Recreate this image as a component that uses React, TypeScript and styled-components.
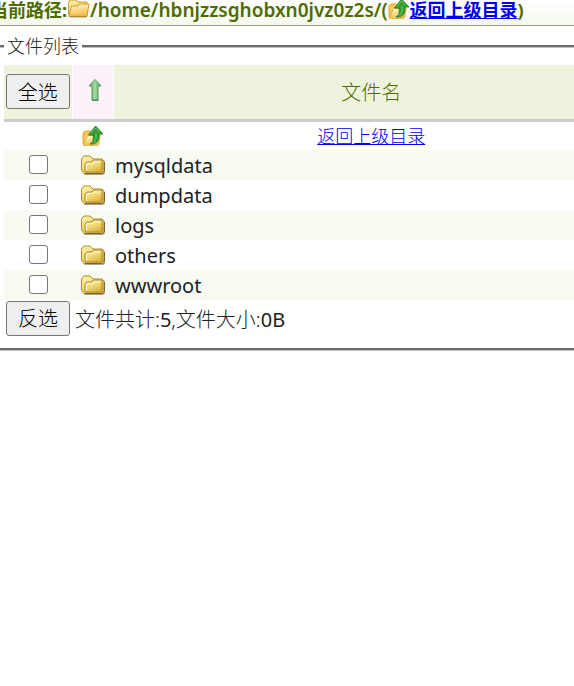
import React, { useState } from "react";
import styled, { createGlobalStyle } from "styled-components";

const GlobalStyle = createGlobalStyle`
  body {
    margin: 0;
    background: #fff;
    color: #222;
    font-family: "Noto Sans", "Noto Sans CJK SC", sans-serif;
    font-size: 20px;
  }
`;

const Viewport = styled.div`
  overflow: hidden;
`;

/* The manager is wider than its frame, which shows it scrolled a little. */
const Manager = styled.main`
  margin: 0 -60px 0 -10px;
`;

const PathBar = styled.header`
  display: flex;
  align-items: flex-start;
  height: 25px;
  border-bottom: 1px solid #929c80;
  background: linear-gradient(#fff, #f4f9ee);
  color: #4f6b00;
  font-size: 18px;
  font-weight: bold;
  line-height: 20px;
  white-space: nowrap;

  > * {
    flex: none;
  }
`;

const PathText = styled.span`
  font-size: 19px;
  font-weight: 600;
`;

const Link = styled.a`
  color: #0000ee;
  font-size: 18px;
  text-decoration: underline;
`;

const FileSet = styled.fieldset`
  min-width: 0;
  margin: 8px 0 0;
  padding: 7px 0 11px 14px;
  border: 3px groove #c0c0c0;
  border-width: 3px 0;
`;

const Legend = styled.legend`
  margin: 0;
  padding: 0 3px;
  font-size: 18px;
  font-weight: 300;
  line-height: 24px;
`;

const FileTable = styled.table`
  width: 100%;
  border-collapse: collapse;
  table-layout: fixed;
`;

const HeadCell = styled.th<{ $width?: number; $tone?: string }>`
  width: ${(p) => (p.$width ? `${p.$width}px` : "auto")};
  height: 55px;
  box-sizing: border-box;
  padding: ${(p) => (p.$width ? "0" : "0 4px 0 0")};
  border-right: 1px solid #fff;
  border-bottom: 3px solid #ccc;
  background: ${(p) => p.$tone || "#eef3de"};
  color: #4f6b00;
  font-weight: 300;
  text-align: center;
  vertical-align: middle;
`;

const Row = styled.tr<{ $tinted?: boolean; $height: number }>`
  height: ${(p) => p.$height}px;
  background: ${(p) => (p.$tinted ? "#f7fbf2" : "#fff")};
`;

const Cell = styled.td<{ $center?: boolean }>`
  padding: ${(p) => (p.$center ? "0 4px 0 0" : "0")};
  text-align: ${(p) => (p.$center ? "center" : "left")};
  vertical-align: middle;
  line-height: 28px;
  font-weight: ${(p) => (p.$center ? 300 : 400)};
`;

const NameCell = styled(Cell)`
  padding: 2px 0 0 2px;
`;

const Tick = styled.input`
  appearance: none;
  display: block;
  width: 19px;
  height: 19px;
  margin: 0 auto;
  border: 1px solid #767676;
  border-radius: 3px;
  background: #fff;

  &:checked {
    background: #0075ff;
    box-shadow: inset 0 0 0 3px #fff;
  }
`;

const Button = styled.button`
  height: 35px;
  padding: 2px 11px 0;
  border: 1px solid #767676;
  border-radius: 3px;
  background: #efefef;
  color: #000;
  font-family: inherit;
  font-size: 20px;
  font-weight: 300;
  line-height: 30px;
`;

const Footer = styled.div`
  display: flex;
  align-items: center;
  gap: 5px;
  padding: 1px 2px;
  font-weight: 300;
`;

const Count = styled.span`
  font-weight: 400;
`;

const Glyph = styled.svg`
  display: block;
  margin: 0 auto;
`;

const PathGlyph = styled(Glyph)`
  margin: -2px 0 0;
`;

function Gradients() {
  return (
    <svg width="0" height="0" style={{ display: "block" }} aria-hidden="true">
      <defs>
        <linearGradient id="gold" x1="0" y1="0" x2="0.6" y2="1">
          <stop offset="0" stopColor="#fff6b4" />
          <stop offset="0.55" stopColor="#f3d973" />
          <stop offset="1" stopColor="#dfb544" />
        </linearGradient>
        <linearGradient id="cream" x1="0" y1="0" x2="0.3" y2="1">
          <stop offset="0" stopColor="#fffbd8" />
          <stop offset="1" stopColor="#f3bd4c" />
        </linearGradient>
        <linearGradient id="leaf" x1="0" y1="0" x2="1" y2="0">
          <stop offset="0" stopColor="#57a85c" />
          <stop offset="0.5" stopColor="#a5dba2" />
          <stop offset="1" stopColor="#4d9a52" />
        </linearGradient>
      </defs>
    </svg>
  );
}

function Folder() {
  return (
    <Glyph width="26" height="22" viewBox="0 0 26 22" aria-hidden="true">
      <path d="M3 19.500h20l2-2v2l-2 1.500H5z" fill="#5b4a20" opacity="0.5" />
      <path d="M1.500 16V5L4 2h6l3 3h9l2 2v11l-1.500 1.500H4z" fill="url(#gold)" stroke="#b58b2c" />
      <path d="M5 17V10l2-2h5l1-2h9v10l-1 2H6z" fill="url(#gold)" stroke="#a98a34" />
      <path d="M6.500 17v-6l1-1.500H13l1-1.500h6.500" fill="none" stroke="#fffbd0" />
      <path d="M24.500 8v9.500l-2 2H5" fill="none" stroke="#7d6428" />
    </Glyph>
  );
}

function UpShapes() {
  return (
    <>
      <path d="M1 19V8l2-2h5l2 2h7v11z" fill="#f3c95c" stroke="#e2a42e" />
      <path d="M1.500 20.500l4-10h13l-3 10z" fill="url(#cream)" stroke="#e6b450" />
      <path d="M8 19c3.500-1.500 3.500-5 3-9H6.500L13.500 1l7.500 8h-4c.5 6-2 10.500-9 10z" fill="#2c9a2c" stroke="#2a8a2c" />
      <path d="M9 8.500L13.500 3l4 4.500" fill="none" stroke="#7ac66c" />
      <path d="M14 8c.7 4.500 0 7-2.500 9.500" fill="none" stroke="#54b64a" strokeWidth="2" />
    </>
  );
}

function SortArrow() {
  return (
    <Glyph width="16" height="28" viewBox="0 0 16 28" aria-hidden="true">
      <path d="M10 1.500l6 6.500h-3v14H7V8H4z" fill="url(#leaf)" stroke="#519b56" strokeLinejoin="round" />
      <path d="M7 22.300h6.500" stroke="#397c40" />
    </Glyph>
  );
}

const files = ["mysqldata", "dumpdata", "logs", "others", "wwwroot"];

export default function App() {
  const [picked, setPicked] = useState<string[]>([]);
  const toggle = (name: string) =>
    setPicked((p) => (p.includes(name) ? p.filter((n) => n !== name) : [...p, name]));

  return (
    <Viewport>
      <GlobalStyle />
      <Gradients />
      <Manager>
        <PathBar>
          <span>当前路径:</span>
          <PathGlyph width="23" height="20" viewBox="0 0 23 20" aria-hidden="true">
            <path d="M1.500 17V4L3 2h6l2 2h9v13z" fill="url(#gold)" stroke="#cf9a2e" />
            <path d="M2 18.300L4.500 8H11l1.500-2H22l-2 12.300z" fill="url(#cream)" stroke="#d49b2c" />
            <path d="M2.500 18.800h17" stroke="#a8741b" />
          </PathGlyph>
          <PathText>/home/hbnjzzsghobxn0jvz0z2s/(</PathText>
          <PathGlyph width="22" height="22" viewBox="0 0 22 22" aria-hidden="true">
            <UpShapes />
          </PathGlyph>
          <Link href="#up">返回上级目录</Link>
          <span>)</span>
        </PathBar>
        <FileSet>
          <Legend>文件列表</Legend>
          <FileTable>
            <thead>
              <tr>
                <HeadCell $width={68}>
                  <Button type="button" onClick={() => setPicked(files)}>全选</Button>
                </HeadCell>
                <HeadCell $width={41} $tone="#fcf1fa"><SortArrow /></HeadCell>
                <HeadCell>文件名</HeadCell>
              </tr>
            </thead>
            <tbody>
              <Row $height={28}>
                <Cell />
                <Cell>
                  <Glyph width="22" height="22" viewBox="0 0 22 22" aria-hidden="true"><UpShapes /></Glyph>
                </Cell>
                <Cell $center><Link href="#up">返回上级目录</Link></Cell>
              </Row>
              {files.map((name, i) => (
                <Row key={name} $height={30} $tinted={i % 2 === 0}>
                  <Cell>
                    <Tick
                      type="checkbox"
                      id={`file-${name}`}
                      checked={picked.includes(name)}
                      onChange={() => toggle(name)}
                    />
                  </Cell>
                  <Cell><Folder /></Cell>
                  <NameCell><label htmlFor={`file-${name}`}>{name}</label></NameCell>
                </Row>
              ))}
            </tbody>
          </FileTable>
          <Footer>
            <Button type="button" onClick={() => setPicked(files.filter((n) => !picked.includes(n)))}>
              反选
            </Button>
            <span>
              文件共计:<Count>5</Count>,文件大小:<Count>0B</Count>
            </span>
          </Footer>
        </FileSet>
      </Manager>
    </Viewport>
  );
}
